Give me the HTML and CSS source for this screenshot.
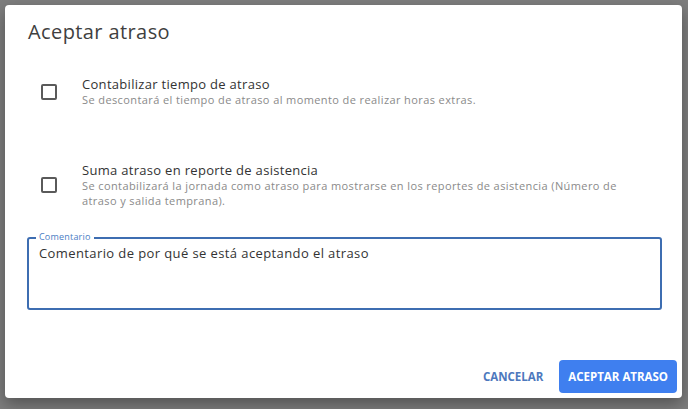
FILE: index.html
```html
<!DOCTYPE html>
<html lang="es">
<head>
<meta charset="utf-8">
<link rel="stylesheet" href="styles.css">
</head>
<body>
<div class="backdrop">
  <div class="dialog">
    <h2 class="title">Aceptar atraso</h2>
    <div class="options">
      <div class="option opt1">
        <span class="box"></span>
        <div class="texts">
          <div class="label">Contabilizar tiempo de atraso</div>
          <div class="hint">Se descontará el tiempo de atraso al momento de realizar horas extras.</div>
        </div>
      </div>
      <div class="option opt2">
        <span class="box"></span>
        <div class="texts">
          <div class="label">Suma atraso en reporte de asistencia</div>
          <div class="hint">Se contabilizará la jornada como atraso para mostrarse en los reportes de asistencia (Número de atraso y salida temprana).</div>
        </div>
      </div>
    </div>
    <div class="field">
      <span class="field-label">Comentario</span>
      <div class="field-value">Comentario de por qué se está aceptando el atraso</div>
    </div>
    <div class="actions">
      <button class="btn text">CANCELAR</button>
      <button class="btn primary">ACEPTAR ATRASO</button>
    </div>
  </div>
</div>
</body>
</html>
```
FILE: styles.css
```css
* { box-sizing: border-box; }
html, body { margin: 0; padding: 0; }
body {
  width: 688px;
  height: 409px;
  overflow: hidden;
  background: #7e7e7e;
  font-family: "Open Sans", "Noto Sans", sans-serif;
}
.backdrop {
  padding: 5px 6px 0 5px;
}
.dialog {
  width: 677px;
  height: 393px;
  background: #fff;
  border-radius: 4px;
  box-shadow: 0 6px 16px rgba(0,0,0,0.35);
  padding: 13px 5px 0 22px;
  display: flex;
  flex-direction: column;
}
.title {
  margin: 0 0 0 1px;
  font-size: 20px;
  font-weight: 400;
  letter-spacing: 0.4px;
  color: #3f3f3f;
  line-height: 28px;
}
.options {
  padding-left: 14px;
  margin-top: 30px;
}
.option {
  display: flex;
  align-items: center;
  gap: 25px;
}
.opt2 { margin-top: 55px; }
.box {
  width: 16px;
  height: 16px;
  border: 2px solid #5a5a5a;
  border-radius: 2px;
  flex: none;
}
.texts { width: 560px; }
.label {
  font-size: 13px;
  letter-spacing: 0.3px;
  color: #333;
  line-height: 16px;
}
.hint {
  font-size: 11px;
  letter-spacing: 0.4px;
  color: #8a8a8a;
  line-height: 15px;
}
.field {
  position: relative;
  margin-top: 29px;
  margin-right: 15px;
  height: 73px;
  border: 2px solid #3d6db1;
  border-radius: 3px;
  padding: 5px 10px;
}
.field-label {
  position: absolute;
  top: -8px;
  left: 7px;
  padding: 0 3px;
  background: #fff;
  font-size: 9px;
  letter-spacing: 0.2px;
  line-height: 12px;
  color: #4a7dc4;
}
.field-value {
  font-size: 13px;
  letter-spacing: 0.4px;
  color: #333;
  line-height: 18px;
}
.actions {
  margin-top: auto;
  margin-bottom: 5px;
  display: flex;
  justify-content: flex-end;
  align-items: center;
  gap: 14px;
}
.btn {
  font-family: "Open Sans", "Noto Sans", sans-serif;
  font-weight: 700;
  font-size: 11.5px;
  border: none;
  cursor: pointer;
}
.btn.text {
  background: none;
  color: #4d78bd;
  padding: 0 2px;
}
.btn.primary {
  background: #3f7fef;
  color: #fff;
  height: 33px;
  padding: 0 9px;
  border-radius: 4px;
}
```
